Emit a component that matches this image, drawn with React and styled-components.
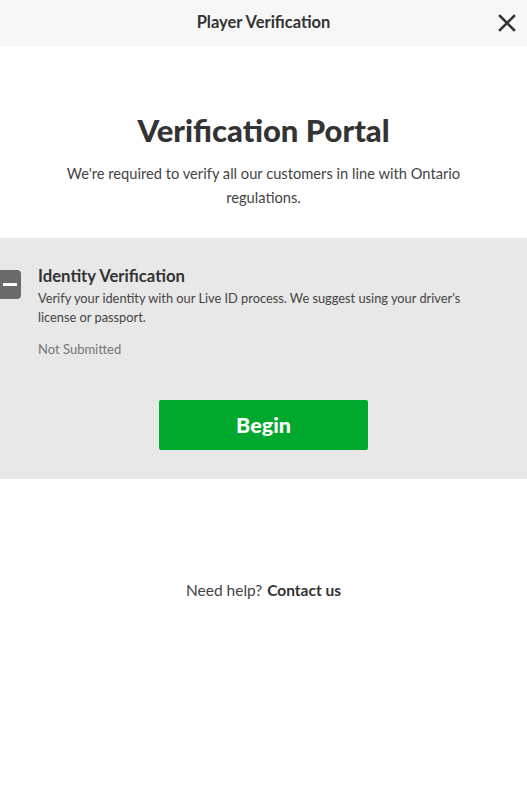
import styled, { createGlobalStyle } from "styled-components";

const GlobalStyle = createGlobalStyle`
  html, body {
    margin: 0;
    padding: 0;
    background: #ffffff;
  }
  body {
    font-family: Lato, "Open Sans", sans-serif;
    color: #333333;
  }
`;

const Page = styled.div`
  width: 527px;
  min-height: 795px;
  display: flex;
  flex-direction: column;
  background: #ffffff;
`;

const Header = styled.header`
  height: 46px;
  background: #f7f7f7;
  display: flex;
  align-items: center;
  justify-content: center;
  position: relative;
`;

const HeaderTitle = styled.h1`
  margin: 0 0 3px;
  font-size: 16.5px;
  font-weight: 700;
  color: #333333;
`;

const CloseButton = styled.button`
  position: absolute;
  right: 10px;
  top: 13px;
  width: 20px;
  height: 20px;
  padding: 0;
  border: 0;
  background: none;
  display: flex;
  align-items: center;
  justify-content: center;
  cursor: pointer;
`;

const Intro = styled.section`
  display: flex;
  flex-direction: column;
  align-items: center;
  padding: 65px 50px 29px;
  text-align: center;
`;

const Heading = styled.h2`
  margin: 0 0 12px;
  font-size: 31px;
  line-height: 38px;
  font-weight: 900;
  color: #333333;
`;

const Lead = styled.p`
  margin: 0;
  font-size: 14.7px;
  line-height: 24px;
  color: #444444;
`;

const StepPanel = styled.section`
  background: #e8e8e8;
  padding: 28px 0 29px;
  display: flex;
  flex-direction: column;
`;

const StepRow = styled.div`
  display: flex;
  align-items: flex-start;
  gap: 17px;
  padding-right: 50px;
`;

const StatusIcon = styled.div`
  flex: 0 0 21px;
  height: 29px;
  margin-top: 4px;
  background: #6b6b6b;
  border-radius: 0 4px 4px 0;
  display: flex;
  align-items: center;
  justify-content: center;

  &::after {
    content: "";
    width: 14px;
    height: 3px;
    background: #ffffff;
    margin-left: -1px;
  }
`;

const StepBody = styled.div`
  display: flex;
  flex-direction: column;
`;

const StepTitle = styled.h3`
  margin: 0 0 2px;
  font-size: 16.7px;
  line-height: 21px;
  font-weight: 700;
  color: #333333;
`;

const StepText = styled.p`
  margin: 0;
  font-size: 12.8px;
  line-height: 19px;
  color: #444444;
`;

const StepStatus = styled.span`
  margin-top: 13px;
  font-size: 13px;
  line-height: 19px;
  color: #777777;
`;

const BeginButton = styled.button`
  align-self: center;
  margin-top: 41px;
  width: 209px;
  height: 50px;
  border: 0;
  border-radius: 2px;
  background: #00a82d;
  color: #ffffff;
  font-family: Lato, "Open Sans", sans-serif;
  font-size: 21.5px;
  font-weight: 900;
  cursor: pointer;
`;

const Help = styled.p`
  margin: 102px 0 0;
  text-align: center;
  font-size: 15.5px;
  color: #444444;

  a {
    color: #333333;
    font-weight: 700;
    text-decoration: none;
    margin-left: 5px;
  }
`;

const App = () => (
  <>
    <GlobalStyle />
    <Page>
      <Header>
        <HeaderTitle>Player Verification</HeaderTitle>
        <CloseButton aria-label="Close">
          <svg width="18" height="18" viewBox="0 0 18 18">
            <path d="M2 2L16 16M16 2L2 16" stroke="#333" strokeWidth="2.6" strokeLinecap="square" />
          </svg>
        </CloseButton>
      </Header>
      <Intro>
        <Heading>Verification Portal</Heading>
        <Lead>We're required to verify all our customers in line with Ontario regulations.</Lead>
      </Intro>
      <StepPanel>
        <StepRow>
          <StatusIcon />
          <StepBody>
            <StepTitle>Identity Verification</StepTitle>
            <StepText>
              Verify your identity with our Live ID process. We suggest using your driver's license or passport.
            </StepText>
            <StepStatus>Not Submitted</StepStatus>
          </StepBody>
        </StepRow>
        <BeginButton type="button">Begin</BeginButton>
      </StepPanel>
      <Help>
        Need help?<a href="#contact">Contact us</a>
      </Help>
    </Page>
  </>
);

export default App;
